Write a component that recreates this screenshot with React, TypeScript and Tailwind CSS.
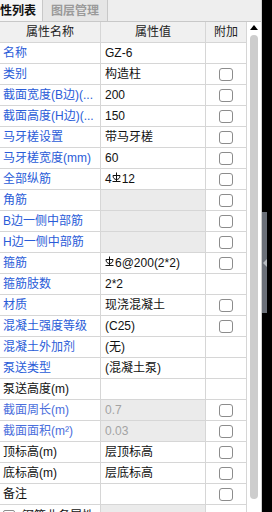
import React from 'react'

type Row = {
  label: string
  value?: React.ReactNode
  blue?: boolean
  light?: boolean
  cb?: boolean
  gray?: boolean
  dim?: boolean
}

function Rebar() {
  return (
    <svg width="9" height="11" viewBox="0 0 9 11" className="inline-block mr-[1px] -mt-[3px] align-middle">
      <path d="M4.5 0.5V9.5M1 3.5h7M1 3.5c0 2.6 1.4 4 3.5 4s3.5-1.4 3.5-4M0.5 9.5h8" fill="none" stroke="#111" strokeWidth="1" />
    </svg>
  )
}

const rows: Row[] = [
  { label: '名称', value: 'GZ-6', blue: true },
  { label: '类别', value: '构造柱', blue: true, cb: true },
  { label: '截面宽度(B边)(...', value: '200', blue: true, cb: true },
  { label: '截面高度(H边)(...', value: '150', blue: true, cb: true },
  { label: '马牙槎设置', value: '带马牙槎', blue: true, cb: true },
  { label: '马牙槎宽度(mm)', value: '60', blue: true, cb: true },
  { label: '全部纵筋', value: <>4<Rebar />12</>, blue: true, cb: true },
  { label: '角筋', blue: true, cb: true, gray: true },
  { label: 'B边一侧中部筋', blue: true, cb: true, gray: true },
  { label: 'H边一侧中部筋', blue: true, cb: true, gray: true },
  { label: '箍筋', value: <><Rebar />6@200(2*2)</>, blue: true, cb: true },
  { label: '箍筋肢数', value: '2*2', blue: true },
  { label: '材质', value: '现浇混凝土', blue: true, cb: true },
  { label: '混凝土强度等级', value: '(C25)', blue: true, cb: true },
  { label: '混凝土外加剂', value: '(无)', blue: true },
  { label: '泵送类型', value: '(混凝土泵)', blue: true },
  { label: '泵送高度(m)' },
  { label: '截面周长(m)', value: '0.7', light: true, cb: true, gray: true, dim: true },
  { label: '截面面积(m²)', value: '0.03', light: true, cb: true, gray: true, dim: true },
  { label: '顶标高(m)', value: '层顶标高', cb: true },
  { label: '底标高(m)', value: '层底标高', cb: true },
  { label: '备注', cb: true },
]

function Check() {
  return <div className="w-[14px] h-[13px] border border-[#8c8c8c] rounded-[3px] bg-white" />
}

export default function App() {
  return (
    <div className="w-[272px] h-[512px] overflow-hidden flex bg-black font-['Liberation_Sans','Noto_Sans_CJK_SC',sans-serif] text-[12px]">
      <div className="w-[262px] flex flex-col bg-white border-r border-[#cfcfcf]">
        {/* Tabs */}
        <div className="h-[22px] flex bg-[#eeeeee] border-b border-[#c8c8c8] shrink-0">
          <div className="w-[43px] flex items-center bg-[#f5f5f5] border-r border-[#c8c8c8] font-bold text-[#111] text-[12px] whitespace-nowrap">
            性列表
          </div>
          <div className="w-[65px] flex items-center justify-center bg-[#e6e6e6] border-r border-[#c8c8c8] font-bold text-[#9a9a9a] text-[12px]">
            图层管理
          </div>
        </div>

        <div className="flex flex-1 min-h-0">
          {/* Table */}
          <div className="w-[247px] flex flex-col border-r border-[#d6d6d6]">
            <div className="h-[21px] flex bg-[#f0f0f0] border-b border-[#d6d6d6] text-[#222] shrink-0">
              <div className="w-[101px] border-r border-[#d6d6d6] flex items-center justify-center">属性名称</div>
              <div className="w-[105px] border-r border-[#d6d6d6] flex items-center justify-center">属性值</div>
              <div className="flex-1 flex items-center justify-center">附加</div>
            </div>
            {rows.map((r) => (
              <div key={r.label} className="h-[21px] flex border-b border-[#d6d6d6] shrink-0">
                <div
                  className={`w-[101px] border-r border-[#d6d6d6] flex items-center pl-[3px] whitespace-nowrap overflow-hidden ${
                    r.light ? 'text-[#4a6edc]' : r.blue ? 'text-[#2a5cd8]' : 'text-[#111]'
                  }`}
                >
                  {r.label}
                </div>
                <div
                  className={`w-[105px] border-r border-[#d6d6d6] flex items-center pl-[4px] whitespace-nowrap overflow-hidden ${
                    r.gray ? 'bg-[#ebebeb]' : ''
                  } ${r.dim ? 'text-[#a3a3a3]' : 'text-[#111]'}`}
                >
                  {r.value}
                </div>
                <div className="flex-1 flex items-center justify-center">{r.cb && <Check />}</div>
              </div>
            ))}
            <div className="h-[21px] flex shrink-0">
              <div className="w-[101px] border-r border-[#d6d6d6] flex items-center pl-[3px] gap-[7px] text-[#111] whitespace-nowrap">
                <div className="w-[12px] h-[12px] border border-[#8c8c8c] rounded-[2px]" />
                钢筋业务属性
              </div>
              <div className="w-[105px] border-r border-[#d6d6d6] bg-[#ebebeb]" />
              <div className="flex-1" />
            </div>
          </div>

          {/* Scrollbar */}
          <div className="flex-1 flex flex-col items-center pt-[3px] pb-[13px]">
            <div className="w-0 h-0 border-l-[4px] border-r-[4px] border-b-[5px] border-l-transparent border-r-transparent border-b-black" />
            <div className="mt-[5px] w-[8px] flex-1 rounded-full bg-[#cdcdcd]" />
          </div>
        </div>
      </div>

      {/* Splitter */}
      <div className="flex-1 relative">
        <div className="absolute left-0 top-[212px] w-[5px] h-[101px] bg-[#6b7079] flex items-center justify-center">
          <div className="w-0 h-0 border-t-[4px] border-b-[4px] border-r-[4px] border-t-transparent border-b-transparent border-r-[#b8bcc2]" />
        </div>
      </div>
    </div>
  )
}
